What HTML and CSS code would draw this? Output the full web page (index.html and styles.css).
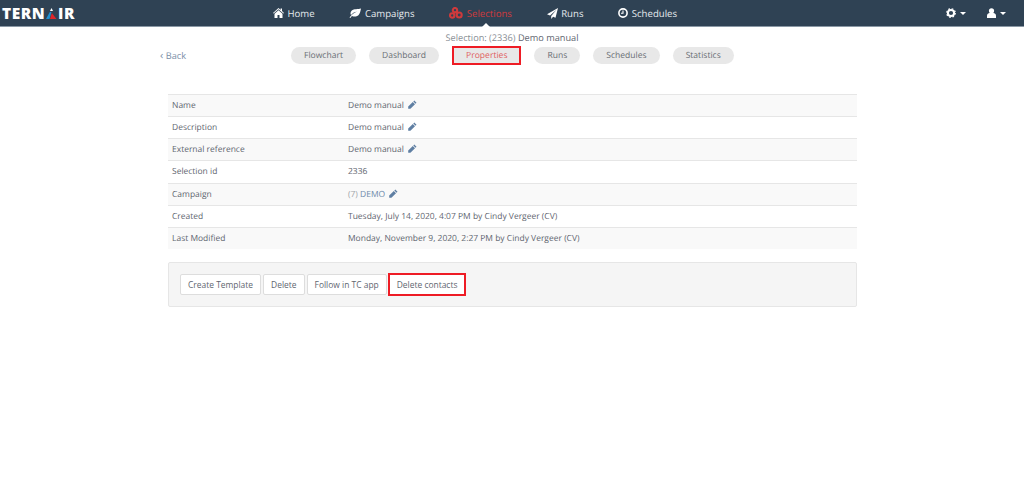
FILE: index.html
```html
<!DOCTYPE html>
<html lang="en">
<head>
<meta charset="utf-8">
<title>Selection properties</title>
<link rel="stylesheet" href="styles.css">
</head>
<body>
<header class="topbar">
  <a class="logo">TERN<svg class="logo-a" width="11" height="11" viewBox="0 0 11 11"><path d="M5.500 0l1.500 3H4z" fill="#fff"/><path d="M3.800 4h1.700L3.500 11H0z" fill="#1f8fd0"/><path d="M5.800 5L10.500 11H4z" fill="#e0262b"/></svg>IR</a>
  <nav class="mainnav">
    <a class="navitem"><svg class="ico" width="11" height="10" viewBox="0 0 11 10"><path d="M5.500 0L0 4.900l.6.6L5.500 1.200l4.900 4.300.6-.6L9 3.100V.6H7.600v1.300zM1.500 5.700V10h3V7h2v3h3V5.700L5.500 2.200z" fill="#fff"/></svg>Home</a>
    <a class="navitem"><svg class="ico" width="12" height="10" viewBox="0 0 12 10"><path d="M12 .5C9 1.500 5 .5 2.800 2.500 1.200 4 1.300 6 2 7 3.500 5 6 3.800 8 3.500 5.500 4.500 2.500 6.500.5 9.500l.9.5C2 9 2.600 8.300 3 8c2.500 1 5.500.6 7-1.500C11.400 4.600 11.500 2.500 12 .5z" fill="#fff"/></svg>Campaigns</a>
    <a class="navitem navactive"><svg class="ico" width="14" height="12" viewBox="0 0 14 12"><g fill="none" stroke="#cf3a3c" stroke-width="2.100"><circle cx="6" cy="3.200" r="2.200"/><circle cx="3.200" cy="8.500" r="2.200"/><circle cx="10.200" cy="8" r="2.500"/></g></svg>Selections</a>
    <a class="navitem"><svg class="ico" width="11" height="11" viewBox="0 0 11 11"><path d="M11 0L0 6.300l3 1.200L9.500 1.800 4.200 8v3l1.900-2.300 2.400 1z" fill="#fff"/></svg>Runs</a>
    <a class="navitem"><svg class="ico" width="10" height="10" viewBox="0 0 10 10"><circle cx="5" cy="5" r="4.100" fill="none" stroke="#fff" stroke-width="1.600"/><path d="M5 2.400V5.300H3" fill="none" stroke="#fff" stroke-width="1.100"/></svg>Schedules</a>
  </nav>
  <div class="usernav">
    <span class="dropdown"><svg width="10" height="10" viewBox="0 0 10 10"><circle cx="5" cy="5" r="3.100" fill="none" stroke="#fff" stroke-width="2"/><circle cx="5" cy="5" r="4.300" fill="none" stroke="#fff" stroke-width="1.200" stroke-dasharray="1.700 1.700"/></svg><i class="caret"></i></span>
    <span class="dropdown"><svg width="9" height="10" viewBox="0 0 9 10"><circle cx="4.500" cy="2.800" r="2.600" fill="#fff"/><path d="M0 10V7.500C0 6 1.500 5 2.500 5h4C7.500 5 9 6 9 7.500V10z" fill="#fff"/></svg><i class="caret"></i></span>
  </div>
</header>
<div class="pointer"></div>
<main class="content">
  <p class="crumb">Selection: (2336) <span class="crumb-name">Demo manual</span></p>
  <div class="subnav">
    <a class="back"><span class="chev">‹</span> Back</a>
    <div class="pills">
      <a class="pill">Flowchart</a>
      <a class="pill">Dashboard</a>
      <a class="pill pill-active marked">Properties</a>
      <a class="pill">Runs</a>
      <a class="pill">Schedules</a>
      <a class="pill">Statistics</a>
    </div>
  </div>
  <div class="panel">
    <table class="props">
      <tr><td class="key">Name</td><td>Demo manual<svg class="edit" width="9" height="9" viewBox="0 0 9 9"><path d="M6.300.5L8.500 2.700 7.500 3.700 5.300 1.500zM4.800 2L7 4.200 2.400 8.800H.2V6.600z" fill="#5f7fa3"/></svg></td></tr>
      <tr><td class="key">Description</td><td>Demo manual<svg class="edit" width="9" height="9" viewBox="0 0 9 9"><path d="M6.300.5L8.500 2.700 7.500 3.700 5.300 1.500zM4.800 2L7 4.200 2.400 8.800H.2V6.600z" fill="#5f7fa3"/></svg></td></tr>
      <tr><td class="key">External reference</td><td>Demo manual<svg class="edit" width="9" height="9" viewBox="0 0 9 9"><path d="M6.300.5L8.500 2.700 7.500 3.700 5.300 1.500zM4.800 2L7 4.200 2.400 8.800H.2V6.600z" fill="#5f7fa3"/></svg></td></tr>
      <tr><td class="key">Selection id</td><td>2336</td></tr>
      <tr><td class="key">Campaign</td><td><span class="muted">(7)</span> <a class="link">DEMO</a><svg class="edit" width="9" height="9" viewBox="0 0 9 9"><path d="M6.300.5L8.500 2.700 7.500 3.700 5.300 1.500zM4.800 2L7 4.200 2.400 8.800H.2V6.600z" fill="#5f7fa3"/></svg></td></tr>
      <tr><td class="key">Created</td><td>Tuesday, July 14, 2020, 4:07 PM by Cindy Vergeer (CV)</td></tr>
      <tr><td class="key">Last Modified</td><td>Monday, November 9, 2020, 2:27 PM by Cindy Vergeer (CV)</td></tr>
    </table>
    <div class="well">
      <button class="btn">Create Template</button>
      <button class="btn">Delete</button>
      <button class="btn">Follow in TC app</button>
      <button class="btn marked">Delete contacts</button>
    </div>
  </div>
</main>
</body>
</html>
```
FILE: styles.css
```css
* { box-sizing: border-box; }
html, body { margin: 0; padding: 0; }
body {
  width: 1024px;
  height: 500px;
  overflow: hidden;
  background: #fff;
  font-family: "Open Sans", sans-serif;
  font-size: 8.47px;
  color: #5f6670;
  text-rendering: geometricPrecision;
}
.topbar {
  height: 27px;
  background: #2f4254;
  border-bottom: 1px solid #8a98a5;
  display: flex;
  align-items: center;
  padding: 0 0 0 2px;
  color: #fff;
}
.logo {
  width: 271px;
  flex: none;
  display: flex;
  align-items: center;
  font-weight: 800;
  font-size: 15.5px;
  letter-spacing: .5px;
  color: #fff;
}
.logo-a { margin: 0 1px 0 1px; }
.mainnav { display: flex; align-items: center; flex: 1; }
.navitem {
  display: flex;
  align-items: center;
  gap: 3.5px;
  font-size: 9.6px;
  color: #e6eaee;
  margin-right: 34.8px;
}
.navactive { color: #cf3a3c; }
.ico { flex: none; }
.usernav { display: flex; align-items: center; gap: 21px; padding-right: 18px; }
.dropdown { display: flex; align-items: center; gap: 4px; }
.caret {
  width: 0;
  height: 0;
  border-left: 3px solid transparent;
  border-right: 3px solid transparent;
  border-top: 3px solid #fff;
}
.pointer {
  position: absolute;
  left: 482px;
  top: 23px;
  width: 0;
  height: 0;
  border-left: 4px solid transparent;
  border-right: 4px solid transparent;
  border-bottom: 4px solid #fff;
}
.crumb {
  margin: 0;
  padding-top: 4px;
  height: 17px;
  line-height: 13px;
  font-size: 9.2px;
  text-align: center;
  color: #8a8f96;
}
.crumb-name { color: #5f6670; }
.subnav {
  display: flex;
  align-items: center;
  height: 22px;
  padding-left: 160px;
}
.back { width: 131px; color: #7b8fa8; flex: none; font-size: 9.2px; }
.chev { font-size: 11px; }
.pills { display: flex; align-items: center; gap: 13px; font-size: 8.55px; }
.pill {
  height: 17px;
  line-height: 17px;
  padding: 0 13px;
  border-radius: 9px;
  background: #e8e8e8;
  color: #6a6f75;
}
.pill-active { color: #e0605f; border-radius: 0; margin: 0 1px; }
.marked { outline: 2px solid #ee1c25; outline-offset: -1px; }
.panel { padding: 28px 167px 0 168px; }
.props { width: 100%; border-collapse: collapse; }
.props tr:nth-child(odd) { background: #f9f9f9; }
.props td {
  height: 22.14px;
  padding: 0 4px;
  border-top: 1px solid #e6e6e6;
}
.props .key { width: 176px; }
.edit { margin-left: 4px; vertical-align: -1px; }
.muted { color: #a0a4a9; }
.link { color: #6f8bab; }
.well {
  margin-top: 13px;
  height: 45px;
  background: #f5f5f5;
  border: 1px solid #e6e6e6;
  border-radius: 2px;
  padding: 0 11px;
  display: flex;
  align-items: center;
  gap: 2px;
  font-size: 8.45px;
}
.btn {
  font: inherit;
  color: #5f6670;
  height: 21px;
  padding: 0 7px;
  background: #fff;
  border: 1px solid #ddd;
  border-radius: 2px;
}
.btn.marked { border-radius: 0; }
```
